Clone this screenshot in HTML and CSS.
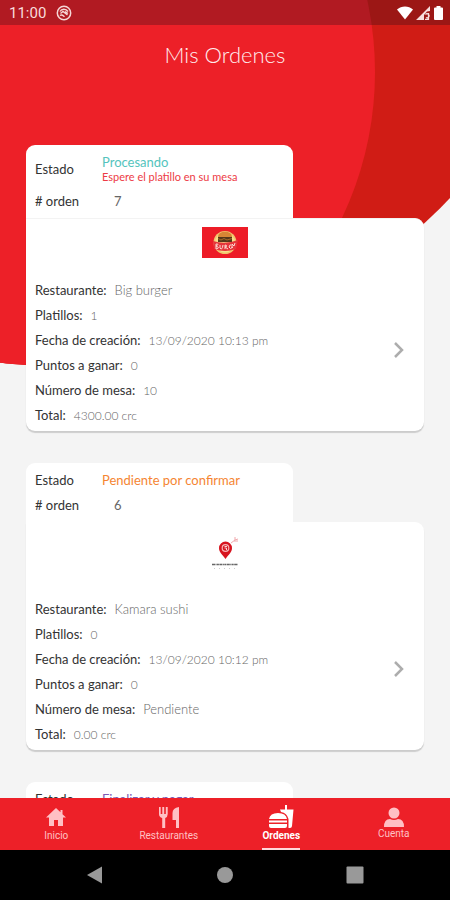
FILE: index.html
```html
<!DOCTYPE html>
<html lang="es">
<head>
<meta charset="utf-8">
<meta name="viewport" content="width=device-width, initial-scale=1">
<title>Mis Ordenes</title>
<link rel="stylesheet" href="styles.css">
</head>
<body>
<div class="screen">
  <svg class="backdrop" viewBox="0 0 450 400" aria-hidden="true">
    <defs><clipPath id="disc"><circle cx="59" cy="-173" r="539"/></clipPath></defs>
    <circle cx="59" cy="-173" r="539" fill="#d01c15"/>
    <circle cx="36" cy="72" r="339" fill="#ed2028" clip-path="url(#disc)"/>
  </svg>

  <div class="status">
    <span class="clock">11:00</span>
    <svg class="status-app" viewBox="0 0 16 16" aria-hidden="true">
      <circle cx="8" cy="8" r="6.7" fill="none" stroke="#f6d6d6" stroke-width="1.5"/>
      <path d="M4 6.500C5.500 3.500 10 3.500 12 6.500M4.500 8.500L7 6.500L11.500 10M4 10.500C6 9 7 10.500 8.500 11.800M9 6.500L12 8.500" fill="none" stroke="#f6d6d6" stroke-width="1.400"/>
    </svg>
    <span class="signals">
      <svg width="16" height="14" viewBox="0 0 16 14" aria-hidden="true"><path d="M0 3.500C4.500-.6 11.500-.6 16 3.500L8 13.500Z" fill="#fff"/></svg>
      <svg width="15" height="14" viewBox="0 0 15 14" aria-hidden="true"><path d="M14 0V5L11 5.500L8 9V14H0Z" fill="#f7dede"/><path d="M9.500 8.500A2 2 0 1 1 10 11.500M12.500 7V13.500H9" fill="none" stroke="#f7dede" stroke-width="1.300"/></svg>
      <svg width="9" height="14" viewBox="0 0 9 14" aria-hidden="true"><path d="M2.500 0H6.500V1.500H8Q9 1.500 9 2.500V13Q9 14 8 14H1Q0 14 0 13V2.500Q0 1.500 1 1.500H2.500Z" fill="#fff"/></svg>
    </span>
  </div>

  <h1 class="title">Mis Ordenes</h1>

  <main class="orders">
    <article class="order">
      <dl class="tab">
        <div class="tab-row tall"><dt>Estado</dt><dd class="processing">Procesando<small>Espere el platillo en su mesa</small></dd></div>
        <div class="tab-row"><dt># orden</dt><dd class="number">7</dd></div>
      </dl>
      <div class="body ruled">
        <svg class="logo" width="46" height="31" viewBox="0 0 46 31" role="img" aria-label="Logo">
          <rect width="46" height="31" fill="#ed1c27"/>
          <circle cx="23" cy="15.500" r="11.500" fill="#f0c56c"/>
          <circle cx="23" cy="15.500" r="10" fill="#f7df8b"/>
          <path d="M16 10C16 3 30 3 30 10Z" fill="#d78635"/>
          <path d="M16 10H30V15H16Z" fill="#54371b"/>
          <path d="M16 11.500L19 13L22 11.500L25 13L30 11.500" fill="none" stroke="#a66b28"/>
          <path d="M11 14Q23 18 36 13L34 22Q23 26 12 22Z" fill="#e5353b"/>
          <path d="M14 17V22M14 17Q18 17 14 19Q19 21 14 22M18 18V21Q20 24 21 18M23 22V18Q27 19 23 20L26 22M31 18Q27 17 27 20Q28 23 31 20H29M33 16L32 19L30 17" fill="none" stroke="#fbd9d3" stroke-width="1"/>
        </svg>
        <div class="details">
          <dl class="facts">
            <div><dt>Restaurante:</dt><dd>Big burger</dd></div>
            <div><dt>Platillos:</dt><dd class="numeric">1</dd></div>
            <div><dt>Fecha de creación:</dt><dd class="numeric">13/09/2020 10:13 pm</dd></div>
            <div><dt>Puntos a ganar:</dt><dd class="numeric">0</dd></div>
            <div><dt>Número de mesa:</dt><dd class="numeric">10</dd></div>
            <div><dt>Total:</dt><dd class="numeric">4300.00 crc</dd></div>
          </dl>
          <button class="open" type="button" aria-label="Ver orden 7"><svg width="12" height="18" viewBox="0 0 12 18"><path d="M2 2L9 9L2 16" fill="none" stroke="#adadad" stroke-width="2.500"/></svg></button>
        </div>
      </div>
    </article>

    <article class="order">
      <dl class="tab">
        <div class="tab-row"><dt>Estado</dt><dd class="pending">Pendiente por confirmar</dd></div>
        <div class="tab-row"><dt># orden</dt><dd class="number">6</dd></div>
      </dl>
      <div class="body">
        <svg class="logo" width="47" height="47" viewBox="0 0 47 47" role="img" aria-label="Logo">
          <path d="M23.500 29C20 24 17 22 17 18A6.500 6.500 0 0 1 30 18C30 22 27 24 23.500 29Z" fill="#d7141f"/>
          <circle cx="23.500" cy="18" r="3.300" fill="none" stroke="#f6b6b8" stroke-width="1.200"/>
          <path d="M22.500 16.500H25M22.500 18H24.500V20" fill="none" stroke="#fff" stroke-width=".8"/>
          <path d="M29 13L33 10L36 9M33 10V7M32 11L36 11" fill="none" stroke="#f0a9ad" stroke-width="1"/>
          <path d="M10 34.500H36" stroke="#666" stroke-width="1.500" stroke-dasharray="3 .5 1 .4 2 .5"/>
          <path d="M12 38.500H36" stroke="#ccc" stroke-width="1" stroke-dasharray="1 4"/>
        </svg>
        <div class="details">
          <dl class="facts">
            <div><dt>Restaurante:</dt><dd>Kamara sushi</dd></div>
            <div><dt>Platillos:</dt><dd class="numeric">0</dd></div>
            <div><dt>Fecha de creación:</dt><dd class="numeric">13/09/2020 10:12 pm</dd></div>
            <div><dt>Puntos a ganar:</dt><dd class="numeric">0</dd></div>
            <div><dt>Número de mesa:</dt><dd>Pendiente</dd></div>
            <div><dt>Total:</dt><dd class="numeric">0.00 crc</dd></div>
          </dl>
          <button class="open" type="button" aria-label="Ver orden 6"><svg width="12" height="18" viewBox="0 0 12 18"><path d="M2 2L9 9L2 16" fill="none" stroke="#adadad" stroke-width="2.500"/></svg></button>
        </div>
      </div>
    </article>

    <article class="order">
      <dl class="tab">
        <div class="tab-row"><dt>Estado</dt><dd class="finish">Finalizar y pagar</dd></div>
      </dl>
    </article>
  </main>

  <nav class="tabs">
    <a href="#inicio"><svg width="22" height="22" viewBox="0 0 22 22" aria-hidden="true"><path d="M11 2L1 11.500H4V20H9V14H13V20H18V11.500H21L17.500 8.200V4H15.500V6.300Z"/></svg><span>Inicio</span></a>
    <a href="#restaurantes"><svg width="22" height="22" viewBox="0 0 22 22" aria-hidden="true"><path d="M1 1H2.700V8H4.300V1H6.200V8H7.800V1H9.700V8Q9.700 11 7.200 12V22H4.200V12Q1 11 1 8ZM21 1V22H18V14H14.500V7Q14.500 2 21 1Z"/></svg><span>Restaurantes</span></a>
    <a href="#ordenes" class="active" aria-current="page"><svg width="26" height="24" viewBox="0 0 26 24" aria-hidden="true"><path d="M1 14Q2 8 10 8Q18 8 19 14ZM1 15.500H19V17.500H1ZM1 19H19V21Q19 23 17 23H3Q1 23 1 21ZM12 4.500H17V0H19V4.500H25.500L24 21Q23.800 23 22 23H20.500V14Q19 8 13 7Z"/></svg><span>Ordenes</span></a>
    <a href="#cuenta" class="account"><svg width="20" height="20" viewBox="0 0 20 20" aria-hidden="true"><circle cx="10" cy="6" r="5.500"/><path d="M0 20Q0 12 6 12Q10 14 14 12Q20 12 20 20Z"/></svg><span>Cuenta</span></a>
  </nav>

  <div class="system">
    <button type="button" aria-label="Atrás"><svg width="18" height="18" viewBox="0 0 18 18"><path d="M1 9L16 .5V17.500Z"/></svg></button>
    <button type="button" aria-label="Inicio del sistema"><svg width="18" height="18" viewBox="0 0 18 18"><circle cx="9" cy="9" r="8"/></svg></button>
    <button type="button" aria-label="Recientes"><svg width="18" height="18" viewBox="0 0 18 18"><rect x=".5" y=".5" width="17" height="17" rx="1"/></svg></button>
  </div>
</div>
</body>
</html>
```
FILE: styles.css
```css
* { box-sizing: border-box; }

body {
  margin: 0;
  background: #f4f4f4;
  font-family: Lato, "Open Sans", sans-serif;
  font-size: 13px;
  color: #333;
}

dl, dd { margin: 0; }

button {
  padding: 0;
  border: 0;
  background: none;
}

svg { display: block; }

.screen {
  position: relative;
  display: flex;
  flex-direction: column;
  height: 100vh;
  overflow: hidden;
}

.backdrop {
  position: absolute;
  top: 0;
  left: 0;
  z-index: -1;
  width: 100%;
}

.status {
  display: flex;
  align-items: center;
  gap: 10px;
  height: 25px;
  padding: 0 7px 0 9px;
  background: rgba(20, 10, 20, 0.28);
  color: #f8dcdc;
  font: 400 15px Roboto, sans-serif;
}

.status-app { width: 16px; height: 16px; }

.signals {
  display: flex;
  gap: 3px;
  margin-left: auto;
}

.title {
  margin: 0;
  height: 120px;
  padding-top: 15px;
  color: #ffeded;
  font-size: 22px;
  font-weight: 300;
  line-height: 30px;
  text-align: center;
}

.orders {
  flex: 1;
  min-height: 0;
  overflow: hidden;
  padding: 0 26px;
}

.order { margin-bottom: 32px; }

.tab {
  width: 67%;
  padding: 4px 9px 5px;
  border-radius: 9px 9px 0 0;
  background: #fff;
}

.tab-row {
  display: flex;
  align-items: center;
  min-height: 25px;
}

.tab-row dt { flex: 0 0 67px; }
.tall { min-height: 39px; }
.tab-row small {
  display: block;
  color: #ed3b45;
  font-size: 11px;
  line-height: 14px;
}

.processing { color: #54c4bd; line-height: 16px; }
.pending { color: #f58532; }
.finish { color: #7d5bb5; }
.number { padding-left: 12px; color: #666; }

.body {
  padding: 8px 9px 3px;
  border-radius: 0 9px 9px 9px;
  background: #fff;
  box-shadow: 0 2px 1px rgba(0, 0, 0, 0.16);
}

.ruled { border-top: 1px solid #f3f3f3; }

.logo { margin: 0 auto 20px; }

.details {
  display: flex;
  align-items: center;
}

.facts { flex: 1; }

.facts div {
  display: flex;
  gap: 8px;
  line-height: 25px;
}

.facts dd { color: #666; font-weight: 300; }
.facts .numeric { font-size: 12px; }

.open {
  display: grid;
  place-items: center;
  width: 32px;
  height: 40px;
  margin-bottom: 6px;
}

.tabs {
  display: grid;
  grid-template-columns: repeat(4, 1fr);
  height: 52px;
  background: #ed2028;
}

.tabs a {
  display: flex;
  flex-direction: column;
  align-items: center;
  justify-self: center;
  padding-top: 7px;
  color: #ffc0c4;
  font: 10px/14px Roboto, sans-serif;
  text-decoration: none;
}

.tabs svg { height: 24px; fill: currentColor; }

.tabs .active {
  border-bottom: 2px solid #ffd9db;
  color: #fff;
  font-weight: 700;
}

.tabs .account svg { height: 20px; margin-top: 2px; }

.system {
  display: flex;
  align-items: center;
  justify-content: space-between;
  height: 50px;
  padding: 0 86px;
  background: #000;
}

.system svg { fill: #999; }
```
